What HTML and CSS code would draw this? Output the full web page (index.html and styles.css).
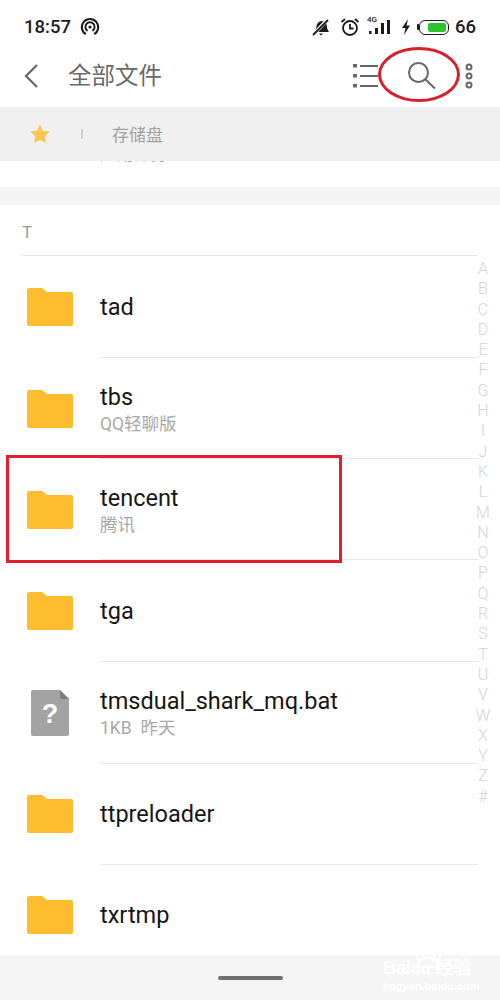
FILE: index.html
```html
<!DOCTYPE html>
<html lang="zh">
<head>
<meta charset="utf-8">
<title>全部文件</title>
<link rel="stylesheet" href="styles.css">
</head>
<body>
<div class="page">
  <div class="status">
    <div class="status-left">
      <span class="time">18:57</span>
      <svg class="hotspot" width="20" height="20" viewBox="0 0 20 20" fill="none" stroke="#1c1c1c"><path d="M5.800 17.200A8.200 8.200 0 1 1 14.200 17.200" stroke-width="2"/><path d="M7.600 13.800A4.600 4.600 0 1 1 12.400 13.800" stroke-width="2"/><circle cx="10" cy="10" r="1.600" fill="#1c1c1c" stroke="none"/></svg>
    </div>
    <div class="status-right">
      <svg width="18" height="18" viewBox="0 0 18 18"><path d="M2 14c1.500-1.500 2-3 2.500-6 .5-3 2.500-4.500 5-5l4.500 1 1 5c.3 2 1 3.500 2 5z" fill="#1c1c1c"/><path d="M1 17L16 1" stroke="#fff" stroke-width="3.500"/><path d="M1 17L16 2" stroke="#1c1c1c" stroke-width="1.800"/><path d="M7 15.500h4l-2 2z" fill="#1c1c1c"/></svg>
      <svg class="gap-alarm" width="20" height="20" viewBox="0 0 20 20" fill="none" stroke="#1c1c1c" stroke-width="1.800"><circle cx="10" cy="11" r="7"/><path d="M10 7v4.500h3.500"/><path d="M1.500 5L5 2M18.500 5L15 2"/></svg>
      <div class="signal">
        <span class="net">4G</span>
        <svg width="25" height="18" viewBox="0 0 25 18" fill="#1c1c1c"><rect x="2" y="13" width="2.500" height="3"/><rect x="8" y="10" width="3" height="6"/><rect x="14" y="5" width="3" height="11"/><rect x="20" y="2" width="3" height="14"/></svg>
      </div>
      <svg class="gap-bolt" width="10" height="16" viewBox="0 0 10 16"><path d="M7 0L1 9h3.500L3 16l6-9.500H5.500z" fill="#1c1c1c"/></svg>
      <div class="battery"><div class="battery-fill"></div></div>
      <span class="level">66</span>
    </div>
  </div>

  <header class="bar">
    <svg class="back" width="16" height="26" viewBox="0 0 16 26" fill="none" stroke="#666" stroke-width="2.200"><path d="M14 2L3 13l11 11"/></svg>
    <h1 class="title">全部文件</h1>
    <div class="tools">
      <svg width="25" height="26" viewBox="0 0 25 26" fill="#666"><rect x="0" y="1" width="4" height="3.500"/><rect x="0" y="11" width="4" height="3.500"/><rect x="0" y="21" width="4" height="3.500"/><rect x="7" y="2" width="18" height="2"/><rect x="7" y="12" width="18" height="2"/><rect x="7" y="22" width="18" height="2"/></svg>
      <svg class="search" width="28" height="27" viewBox="0 0 28 27" fill="none" stroke="#666" stroke-width="2"><circle cx="10.500" cy="10.500" r="9.500"/><path d="M17.500 17.500L27 26.500"/></svg>
      <svg class="more" width="8" height="26" viewBox="0 0 8 26" fill="none" stroke="#666" stroke-width="2"><circle cx="4" cy="4" r="2.500"/><circle cx="4" cy="13" r="2.500"/><circle cx="4" cy="22" r="2.500"/></svg>
    </div>
  </header>

  <nav class="crumbs">
    <svg width="20" height="20" viewBox="0 0 20 20"><path d="M10 0.500l2.900 6.300 6.800.8-5 4.700 1.300 6.800-6-3.400-6 3.400 1.300-6.800-5-4.700 6.800-.8z" fill="#fdc450"/></svg>
    <span class="crumb-sep"></span>
    <span class="crumb">存储盘</span>
  </nav>

  <div class="clipped"><span>应用分身</span></div>
  <div class="band"></div>
  <div class="section">T</div>

  <main class="list">
    <div class="row r100 up">
      <svg class="folder" viewBox="0 0 46 38"><path d="M2 0h13l5 4h24a2 2 0 0 1 2 2v30a2 2 0 0 1-2 2H2a2 2 0 0 1-2-2V2a2 2 0 0 1 2-2z" fill="#fdbd2e"/></svg>
      <div class="body"><div class="name">tad</div></div>
    </div>
    <div class="row r101">
      <svg class="folder" viewBox="0 0 46 38"><path d="M2 0h13l5 4h24a2 2 0 0 1 2 2v30a2 2 0 0 1-2 2H2a2 2 0 0 1-2-2V2a2 2 0 0 1 2-2z" fill="#fdbd2e"/></svg>
      <div class="body low"><div class="name">tbs</div><div class="sub">QQ轻聊版</div></div>
    </div>
    <div class="row r101">
      <svg class="folder" viewBox="0 0 46 38"><path d="M2 0h13l5 4h24a2 2 0 0 1 2 2v30a2 2 0 0 1-2 2H2a2 2 0 0 1-2-2V2a2 2 0 0 1 2-2z" fill="#fdbd2e"/></svg>
      <div class="body low"><div class="name">tencent</div><div class="sub">腾讯</div></div>
    </div>
    <div class="row r102">
      <svg class="folder" viewBox="0 0 46 38"><path d="M2 0h13l5 4h24a2 2 0 0 1 2 2v30a2 2 0 0 1-2 2H2a2 2 0 0 1-2-2V2a2 2 0 0 1 2-2z" fill="#fdbd2e"/></svg>
      <div class="body"><div class="name">tga</div></div>
    </div>
    <div class="row r102">
      <svg class="folder file" viewBox="0 0 38 46"><path d="M2 0h27l9 9v35a2 2 0 0 1-2 2H2a2 2 0 0 1-2-2V2a2 2 0 0 1 2-2z" fill="#a3a3a3"/><path d="M29 0l9 9h-7a2 2 0 0 1-2-2z" fill="#7d7d7d"/><text x="19" y="33" class="q">?</text></svg>
      <div class="body"><div class="name">tmsdual_shark_mq.bat</div><div class="sub">1KB&nbsp; 昨天</div></div>
    </div>
    <div class="row r101 up">
      <svg class="folder" viewBox="0 0 46 38"><path d="M2 0h13l5 4h24a2 2 0 0 1 2 2v30a2 2 0 0 1-2 2H2a2 2 0 0 1-2-2V2a2 2 0 0 1 2-2z" fill="#fdbd2e"/></svg>
      <div class="body"><div class="name">ttpreloader</div></div>
    </div>
    <div class="row last">
      <svg class="folder" viewBox="0 0 46 38"><path d="M2 0h13l5 4h24a2 2 0 0 1 2 2v30a2 2 0 0 1-2 2H2a2 2 0 0 1-2-2V2a2 2 0 0 1 2-2z" fill="#fdbd2e"/></svg>
      <div class="body"><div class="name">txrtmp</div></div>
    </div>
  </main>

  <footer class="home"><span class="home-bar"></span></footer>

  <aside class="index">
    <span>A</span><span>B</span><span>C</span><span>D</span><span>E</span><span>F</span><span>G</span><span>H</span><span>I</span><span>J</span><span>K</span><span>L</span><span>M</span><span>N</span><span>O</span><span>P</span><span>Q</span><span>R</span><span>S</span><span>T</span><span>U</span><span>V</span><span>W</span><span>X</span><span>Y</span><span>Z</span><span>#</span>
  </aside>

  <div class="mark-box"></div>
  <div class="mark-ring"></div>

  <div class="wm">
    <svg class="paw" width="26" height="24" viewBox="0 0 26 24" fill="none" stroke="#fff" stroke-width="2"><ellipse cx="5" cy="11" rx="3" ry="4"/><ellipse cx="10" cy="4.500" rx="2.500" ry="3.500"/><ellipse cx="17" cy="4.500" rx="2.500" ry="3.500"/><ellipse cx="22" cy="11" rx="3" ry="4"/><path d="M3 22c0-6 6-10 10-10s10 4 10 10z"/></svg>
    <div class="wm-top">Bai<span class="wm-du">du</span> 经验</div>
    <div class="wm-url">jingyan.baidu.com</div>
  </div>
</div>
</body>
</html>
```
FILE: styles.css
```css
* { box-sizing: border-box; }
html, body { margin: 0; padding: 0; }
body { background: #fff; font-family: Roboto, "Noto Sans CJK SC", sans-serif; }
.page { position: relative; width: 500px; height: 1000px; overflow: hidden; display: flex; flex-direction: column; background: #fff; }

.status { height: 50px; padding: 4px 24px 0 24px; display: flex; align-items: center; justify-content: space-between; color: #1c1c1c; }
.status-left { display: flex; align-items: center; gap: 9px; }
.time { font-size: 18.500px; font-weight: 500; }
.status-right { display: flex; align-items: center; }
.gap-alarm { margin-left: 10px; }
.signal { position: relative; margin-left: 7px; width: 25px; height: 18px; }
.signal svg { display: block; }
.net { position: absolute; left: 0; top: -2px; font-size: 8px; font-weight: 500; line-height: 8px; }
.gap-bolt { margin-left: 9px; }
.battery { position: relative; margin-left: 8px; width: 30px; height: 15px; padding: 2px; border: 1.300px solid #1c1c1c; border-radius: 6px; display: flex; justify-content: flex-end; }
.battery::before { content: ""; position: absolute; left: -3px; top: 3px; width: 2px; height: 6px; background: #1c1c1c; border-radius: 1px 0 0 1px; }
.battery-fill { width: 18px; height: 100%; background: #2cc52c; border-radius: 2px; }
.level { margin-left: 6px; font-size: 18.500px; font-weight: 500; }

.bar { height: 57px; padding: 0 27px 6px 23px; display: flex; align-items: center; }
.back { flex: none; }
.title { margin: 0 0 0 29px; flex: 1; font-size: 23.500px; font-weight: 400; color: #6a6a6a; line-height: 30px; }
.tools { display: flex; align-items: center; }
.search { margin-left: 30px; }
.more { margin-left: 29px; }

.crumbs { height: 54px; background: #f0f0f0; padding: 0 0 0 30px; display: flex; align-items: center; }
.crumb-sep { width: 2px; height: 10px; background: #d0d0d0; margin-left: 31px; }
.crumb { margin-left: 29px; font-size: 17px; line-height: 24px; margin-top: 1px; color: #a2a2a2; }

.clipped { height: 26px; overflow: hidden; padding-left: 100px; }
.clipped span { display: block; margin-top: -16px; line-height: 18px; font-size: 17px; color: #a8a8a8; }
.band { height: 18px; background: #f3f3f3; }
.section { height: 51px; margin: 0 22px; padding-top: 18px; font-size: 17px; line-height: 18px; color: #9a9a9a; border-bottom: 1px solid #e6e6e6; }

.list { flex: 1; display: flex; flex-direction: column; padding-top: 2px; min-height: 0; }
.row { display: flex; align-items: center; position: relative; flex: none; }
.r100 { height: 100px; }
.r101 { height: 101px; }
.r102 { height: 102px; }
.up { padding-bottom: 2px; }
.row::after { content: ""; position: absolute; left: 100px; right: 22px; bottom: 0; height: 1px; background: #e9e9e9; }
.row.last { height: 89px; padding-top: 10px; }
.row.last::after { display: none; }
.folder { flex: none; margin-left: 27px; width: 46px; height: 38px; }
.folder.file { margin-left: 31px; width: 38px; height: 46px; margin-right: 4px; }
.q { font-family: "Liberation Sans", sans-serif; font-size: 27px; font-weight: 700; fill: #fff; text-anchor: middle; }
.body { margin-left: 27px; display: flex; flex-direction: column; }
.body.low { padding-top: 2px; }
.name { font-size: 23.500px; line-height: 28px; color: #161616; }
.sub { font-size: 17.500px; line-height: 24px; margin-top: 1px; color: #a8a8a8; }

.home { height: 45px; background: #f5f5f5; display: flex; align-items: center; justify-content: center; padding-top: 1px; }
.home-bar { width: 65px; height: 4px; border-radius: 2px; background: #6f6f6f; }

.index { position: absolute; left: 471px; top: 259px; width: 24px; display: flex; flex-direction: column; align-items: center; color: #d4d4d4; font-weight: 300; font-size: 16px; line-height: 20.300px; }

.mark-box { position: absolute; left: 6px; top: 455px; width: 336px; height: 108px; border: 3px solid #e0202f; }
.mark-ring { position: absolute; left: 378px; top: 47px; width: 82px; height: 55px; border: 3px solid #d8202c; border-radius: 50%; }

.wm { position: absolute; left: 383px; top: 950px; width: 112px; color: #fff; }
.paw { position: absolute; left: 32px; top: -5px; }
.wm-top { margin-top: 8px; font-size: 18px; line-height: 20px; font-weight: 700; font-family: "Liberation Sans", "Noto Sans CJK SC", sans-serif; white-space: nowrap; }
.wm-du { font-size: 16px; }
.wm-url { font-size: 11px; line-height: 12px; white-space: nowrap; font-weight: 700; font-family: "Liberation Sans", sans-serif; margin-top: 1px; }
```
